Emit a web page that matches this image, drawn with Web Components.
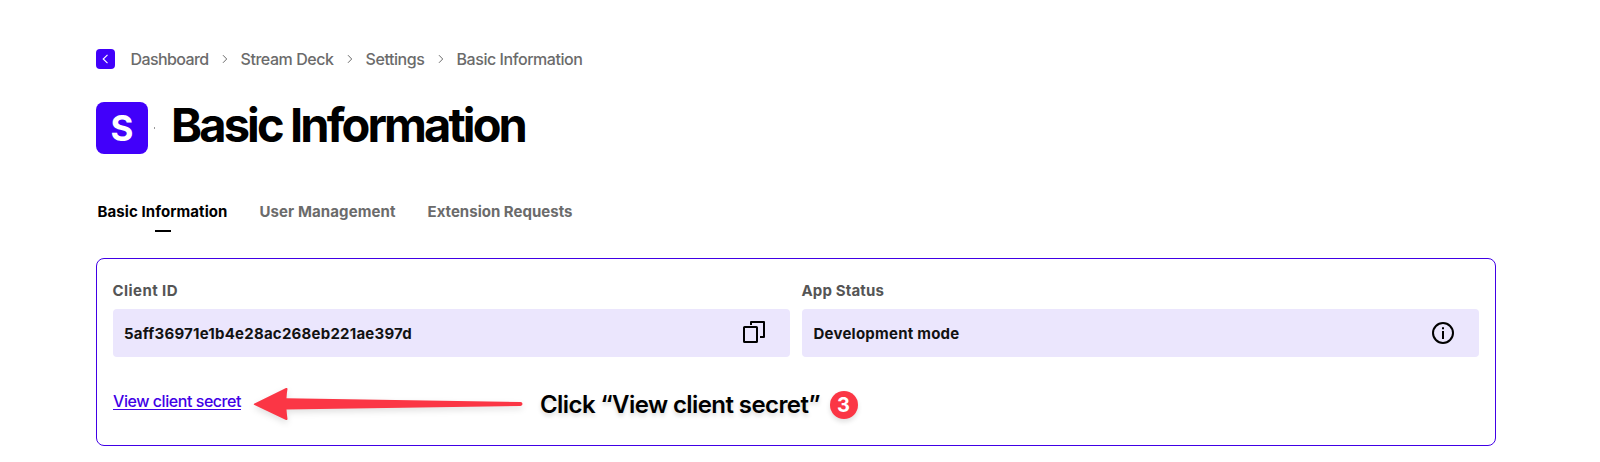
<!DOCTYPE html>
<html lang="en"><head><meta charset="utf-8"><title>Basic Information</title>
<style>
body{margin:0;background:#fff;font-family:Inter,"Liberation Sans",sans-serif;width:1600px;height:462px;overflow:hidden}
</style></head><body>
<settings-page></settings-page>
<script>
const define=(name,html,init)=>{
  const t=document.createElement('template');t.innerHTML=html;
  customElements.define(name,class extends HTMLElement{
    constructor(){super();this.attachShadow({mode:'open'}).append(t.content.cloneNode(true));}
    connectedCallback(){if(init)init(this,this.shadowRoot);}
  });
};

/* A single line of text tracked to span the given width. */
define('text-run',`<style>:host{display:block;white-space:nowrap;font-kerning:normal}span{display:inline-block}</style><span><slot></slot></span>`,(el,root)=>{
  const s=root.querySelector('span'),w=+el.getAttribute('width');
  s.style.letterSpacing='0px';
  const ls=(w-s.getBoundingClientRect().width)/el.textContent.length;
  s.style.letterSpacing=ls.toFixed(4)+'px';
  el.style.width=w+'px';
});

define('crumb-chevron',`<style>:host{display:block;width:6px;height:10px}svg{display:block}</style>
<svg width="6" height="10" viewBox="0 0 6 10" fill="none" stroke="#6b6b6b" stroke-width="1"><path d="M1 1.2 4.7 5 1 8.8"/></svg>`);

define('back-button',`<style>:host{display:block;width:19px;height:20px;border-radius:4px;background:#4100fa}svg{display:block}</style>
<svg width="19" height="20" viewBox="0 0 19 20" fill="none" stroke="#fff" stroke-width="1.1"><path d="M11.5 5.8 7.2 10l4.3 4.2"/></svg>`);

define('crumb-bar',`<style>:host{display:flex;height:24px;align-items:center;font-size:16px;font-weight:500;line-height:24px;color:#6b6b6b}
back-button{margin-right:15.500px}crumb-chevron{margin:0 12.500px 0 13.500px}</style>
<back-button></back-button><text-run width="78">Dashboard</text-run><crumb-chevron></crumb-chevron>
<text-run width="93">Stream Deck</text-run><crumb-chevron></crumb-chevron>
<text-run width="59">Settings</text-run><crumb-chevron></crumb-chevron><text-run width="126">Basic Information</text-run>`);

define('app-heading',`<style>:host{display:flex;align-items:center;height:52px}
.logo{width:52px;height:52px;border-radius:8px;background:#4100fa;color:#fff;font:700 35px/52px Inter,sans-serif;text-align:center}
.dot{width:1px;height:2px;background:#999;margin:0 16px 0 6px}
h1{margin:0;font-size:47px;line-height:52px;font-weight:700;color:#000;position:relative;top:-3px}</style>
<div class="logo">S</div><div class="dot"></div><h1><text-run width="354">Basic Information</text-run></h1>`);

define('tab-item',`<style>:host{display:flex;flex-direction:column;align-items:center;font-size:15px;line-height:20px;font-weight:700;color:#6b6b6b}
:host([active]){color:#000}i{display:block;width:16px;height:2px;margin-top:8px}:host([active]) i{background:#000;position:relative;left:.5px}</style><slot></slot><i></i>`);
define('tab-bar',`<style>:host{display:flex;gap:32px}</style>
<tab-item active><text-run width="130">Basic Information</text-run></tab-item>
<tab-item><text-run width="136">User Management</text-run></tab-item>
<tab-item><text-run width="145">Extension Requests</text-run></tab-item>`);

define('copy-icon',`<style>:host{display:block;margin-top:-3px}svg{display:block}</style>
<svg width="24" height="24" viewBox="0 0 24 24" fill="none" stroke="#000" stroke-width="2"><rect x="2" y="7" width="13" height="15" rx=".6"/><path d="M9 5V2H22v15h-4" stroke-linejoin="round"/></svg>`);
define('info-icon',`<style>:host{display:block;margin-top:-2px}svg{display:block}</style>
<svg width="24" height="24" viewBox="0 0 24 24" fill="none" stroke="#000" stroke-width="2"><circle cx="12" cy="12" r="10"/><path d="M12 10v8M12 6.200v2"/></svg>`);

define('info-field',`<style>:host{display:block;color:#121212}
.label{color:#555;font-weight:700;font-size:15px;line-height:20px;margin:0 0 8px -.5px}
.box{display:flex;align-items:center;justify-content:space-between;height:48px;box-sizing:border-box;padding:1px 24px 0 11px;border-radius:4px;background:#ebe6fd;font-weight:700;font-size:15px;line-height:20px}</style>
<div class="label"><slot name="label"></slot></div><div class="box"><slot></slot><slot name="icon"></slot></div>`);

define('red-arrow',`<style>:host{display:block}svg{display:block;overflow:visible;filter:drop-shadow(0 3px 3px rgba(0,0,0,.12))}</style>
<svg width="272" height="36" viewBox="0 0 272 36" fill="#fb3645"><path d="M1.500 17.500Q0 18.200 1.500 19L33 34Q34.500 34.400 34.500 33Q33.800 28 33.500 23.600L267.500 20Q269.500 19.700 269.500 18Q269.500 16.200 267.500 16.100L33.500 12.300Q33.700 7 34.500 3Q34.500 1.500 33 2Z"/></svg>`);

define('step-badge',`<style>:host{display:block;width:28px;height:28px;border-radius:50%;background:#fb3645;color:#fff;font:700 20px/28px Inter,sans-serif;text-align:center;box-shadow:0 3px 5px rgba(0,0,0,.12)}</style><slot></slot>`);

define('client-card',`<style>:host{display:block;box-sizing:border-box;width:1400px;height:188px;border:1px solid #4100e6;border-radius:8px;padding:22px 16px 0}
.fields{display:grid;grid-template-columns:677px 677px;gap:12px}
.row{display:flex;align-items:center;margin-top:29px;height:36px}
a{display:block;height:18px;color:#4100e6;font-size:16px;font-weight:500;position:relative;top:-2px}
.underline{border-bottom:1px solid #4100e6;line-height:17px;height:16px}
red-arrow{margin-left:12px}
.note{margin:2px 0 0 15px;font-size:24px;line-height:32px;font-weight:600;color:#000;text-shadow:0 3px 4px rgba(0,0,0,.15)}
step-badge{margin:2px 0 0 9.500px}</style>
<div class="fields">
<info-field><text-run slot="label" width="65.5">Client ID</text-run><text-run width="288">5aff36971e1b4e28ac268eb221ae397d</text-run><copy-icon slot="icon"></copy-icon></info-field>
<info-field><text-run slot="label" width="82.5">App Status</text-run><text-run width="146" style="margin-left:.5px">Development mode</text-run><info-icon slot="icon"></info-icon></info-field>
</div>
<div class="row"><a><text-run class="underline" width="128">View client secret</text-run></a><red-arrow></red-arrow>
<div class="note"><text-run width="280">Click “View client secret”</text-run></div><step-badge>3</step-badge></div>`);

define('settings-page',`<style>:host{display:block;padding:47px 0 0 96px}app-heading{margin-top:31px}tab-bar{margin:48px 0 0 1.500px}client-card{margin-top:26px}</style>
<crumb-bar></crumb-bar><app-heading></app-heading><tab-bar></tab-bar><client-card></client-card>`);
</script></body></html>
